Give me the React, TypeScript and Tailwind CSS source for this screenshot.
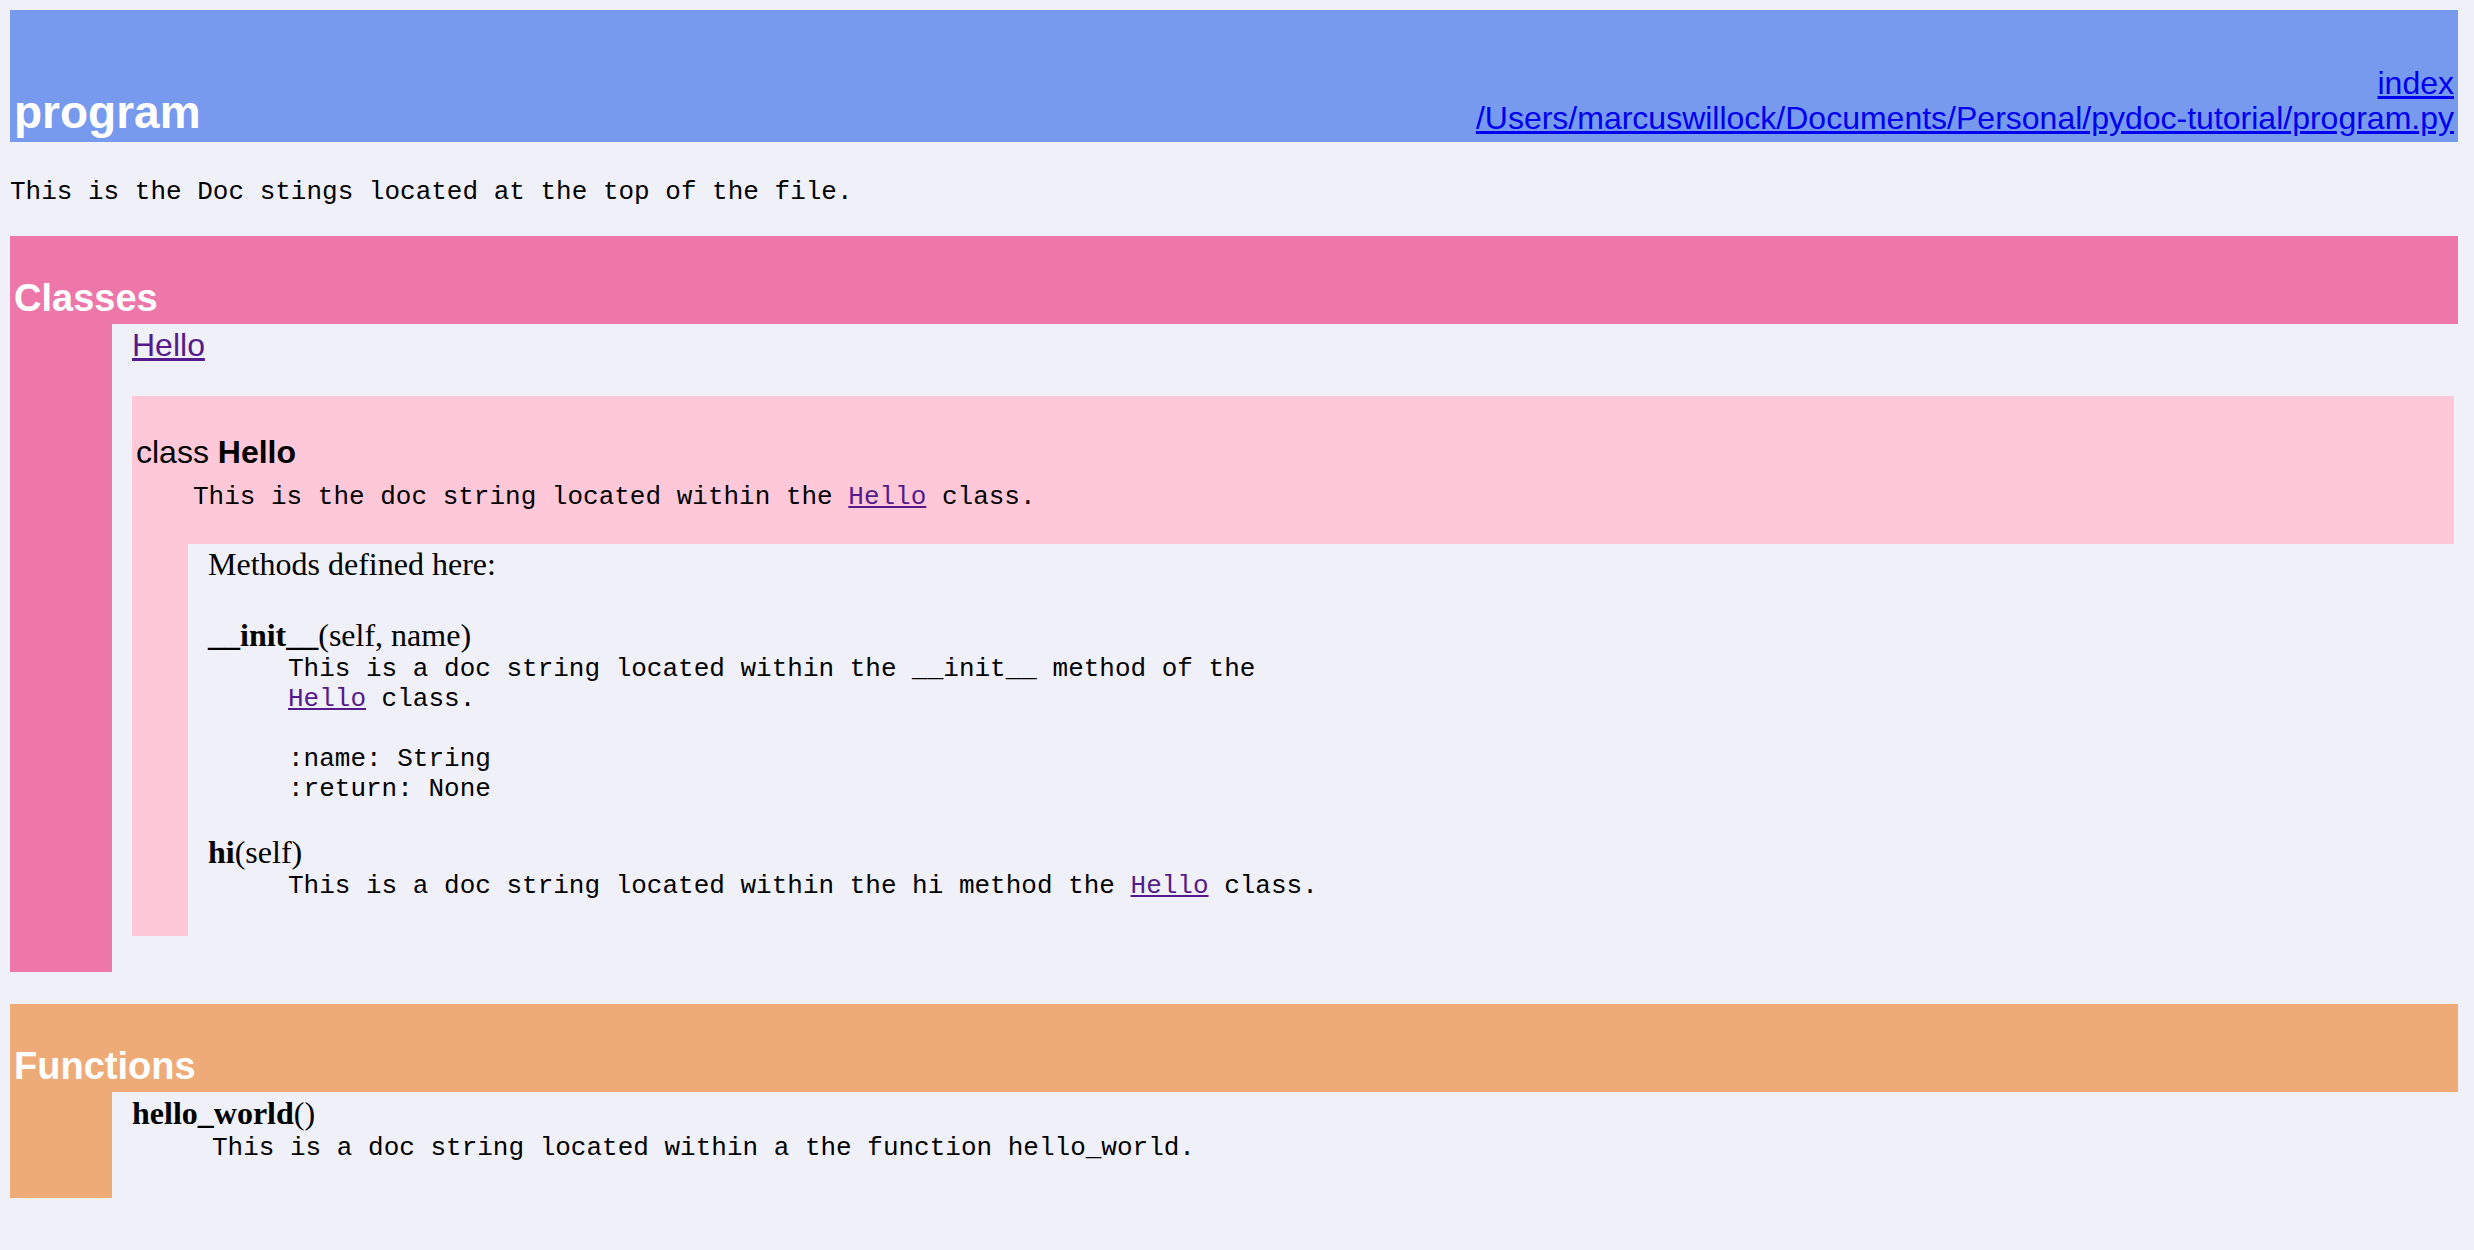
import type { ReactNode } from 'react';

const sans = "font-['Liberation_Sans',Arial,Helvetica,sans-serif]";
const serif = "font-['Liberation_Serif','Times_New_Roman',serif]";
const mono = "font-['Liberation_Mono','Courier_New',monospace]";

function SectionBar({ title, bg, children }: { title: string; bg: string; children: ReactNode }) {
    return (
        <div>
            <div className={`h-[88px] flex items-end pl-[4px] pb-[7px] ${bg}`}>
                <span className={`${sans} text-[38px] leading-none font-bold text-white`}>{title}</span>
            </div>
            <div className="flex">
                <div className={`w-[102px] shrink-0 ${bg}`} />
                <div className="flex-1 ml-[20px] pr-[4px]">{children}</div>
            </div>
        </div>
    );
}

function HelloLink() {
    return <a className="text-[#551a8b] underline">Hello</a>;
}

export default function App() {
    return (
        <div className="min-h-screen bg-[#f0f0f8] pt-[10px] pl-[10px] pr-[16px] text-black">
            {/* heading */}
            <div className="h-[132px] bg-[#7799ee] flex items-end justify-between px-[4px]">
                <div className={`${sans} text-[46px] leading-none font-bold text-white pb-[7px]`}>program</div>
                <div className={`${sans} text-[32px] leading-[35px] text-right pb-[6px]`}>
                    <div><a className="text-[#0000ee] underline">index</a></div>
                    <div>
                        <a className="text-[#0000ee] underline">
                            /Users/marcuswillock/Documents/Personal/pydoc-tutorial/program.py
                        </a>
                    </div>
                </div>
            </div>

            <p className={`${mono} text-[26px] leading-[30px] mt-[35px] whitespace-pre`}>
                This is the Doc stings located at the top of the file.
            </p>

            {/* classes */}
            <div className="mt-[29px]">
                <SectionBar title="Classes" bg="bg-[#ee77aa]">
                    <div className="pt-[4px] pb-[36px]">
                        <div className={`${sans} text-[32px] leading-[35px]`}>
                            <HelloLink />
                        </div>

                        <div className="mt-[33px]">
                            <div className="bg-[#ffc8d8] pt-[39px] pb-[2px]">
                                <div className={`${sans} text-[32px] leading-[35px] pl-[4px]`}>
                                    class <strong>Hello</strong>
                                </div>
                                <div className={`${mono} text-[26px] leading-[30px] pl-[61px] mt-[12px] whitespace-pre`}>
                                    This is the doc string located within the <HelloLink /> class.
                                    <br />
                                    {' '}
                                </div>
                            </div>
                            <div className="flex">
                                <div className="w-[56px] shrink-0 bg-[#ffc8d8]" />
                                <div className={`${serif} text-[32px] pl-[20px] pt-[2px] pb-[35px]`}>
                                    <div className="leading-[37px]">Methods defined here:</div>

                                    <div className="mt-[33px]">
                                        <div className="leading-[38px]">
                                            <strong>__init__</strong>(self, name)
                                        </div>
                                        <div className={`${mono} text-[26px] leading-[30px] pl-[80px] whitespace-pre`}>
                                            <div>This is a doc string located within the __init__ method of the</div>
                                            <div>
                                                <HelloLink /> class.
                                            </div>
                                            <div>{' '}</div>
                                            <div>:name: String</div>
                                            <div>:return: None</div>
                                        </div>
                                    </div>

                                    <div className="mt-[29px]">
                                        <div className="leading-[38px]">
                                            <strong>hi</strong>(self)
                                        </div>
                                        <div className={`${mono} text-[26px] leading-[30px] pl-[80px] whitespace-pre`}>
                                            This is a doc string located within the hi method the <HelloLink /> class.
                                        </div>
                                    </div>
                                </div>
                            </div>
                        </div>
                    </div>
                </SectionBar>
            </div>

            {/* functions */}
            <div className="mt-[32px]">
                <SectionBar title="Functions" bg="bg-[#eeaa77]">
                    <div className={`${serif} text-[32px] pt-[2px] pb-[35px]`}>
                        <div className="leading-[39px]">
                            <strong>hello_world</strong>()
                        </div>
                        <div className={`${mono} text-[26px] leading-[30px] pl-[80px] whitespace-pre`}>
                            This is a doc string located within a the function hello_world.
                        </div>
                    </div>
                </SectionBar>
            </div>
        </div>
    );
}
